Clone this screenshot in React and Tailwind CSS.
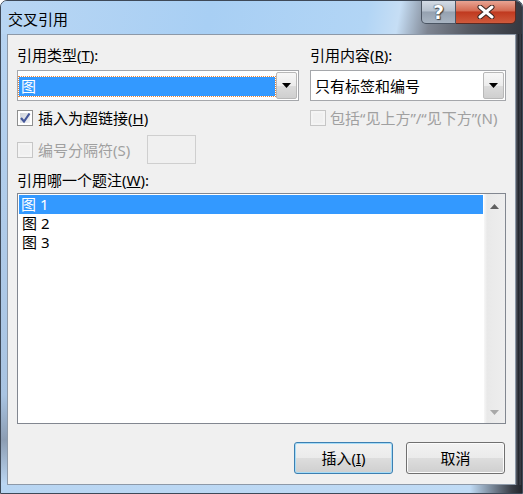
import React from "react";

function Arrow({ color = "#000", up = false }) {
  return (
    <svg width="9" height="5" viewBox="0 0 9 5">
      <polygon points={up ? "0,5 9,5 4.5,0" : "0,0 9,0 4.5,5"} fill={color} />
    </svg>
  );
}

function Checkbox({ checked, disabled }) {
  return (
    <div
      className={`w-[16px] h-[16px] border p-[2px] shrink-0 ${
        disabled ? "border-[#c6c6c6] bg-[#f4f4f4]" : "border-[#8e8f8f] bg-white"
      }`}
    >
      <div
        className={`w-full h-full relative ${
          disabled
            ? "bg-[#f0f0f0]"
            : "bg-[linear-gradient(135deg,#cdd2d9,#f3f4f6)]"
        }`}
      >
        {checked && (
          <svg className="absolute -left-[1px] -top-[1px]" width="12" height="12" viewBox="0 0 12 12">
            <path d="M2 6 L5 9.5 L10.5 1.5" stroke="#44579a" strokeWidth="2.2" fill="none" />
          </svg>
        )}
      </div>
    </div>
  );
}

function DropButton() {
  return (
    <div className="w-[21px] my-[1px] mr-[1px] border border-[#b8b8b8] rounded-[2px] bg-[linear-gradient(to_bottom,#f7f7f7,#ececec_50%,#dcdcdc_51%,#cfcfcf)] flex items-center justify-center">
      <Arrow />
    </div>
  );
}

function WinButton({ children, isDefault }) {
  return (
    <button
      className={`w-[99px] h-[32px] rounded-[3px] border text-[15px] leading-[20px] text-black ${
        isDefault
          ? "border-[#3c7fb1] shadow-[inset_0_0_0_1px_#a6dcf7]"
          : "border-[#707070] shadow-[inset_0_0_0_1px_#fbfbfb]"
      } bg-[linear-gradient(to_bottom,#f2f2f2,#ebebeb_50%,#dddddd_51%,#cfcfcf)]`}
    >
      {children}
    </button>
  );
}

export default function App() {
  return (
    <div className="w-[523px] h-[494px] flex flex-col rounded-t-[7px] border border-[#3e4958] bg-[#b8d5f2] overflow-hidden font-['Noto_Sans','Noto_Sans_CJK_SC',sans-serif] text-[15px] leading-[20px] text-black">
      {/* title bar */}
      <div className="h-[33px] flex items-start justify-between bg-[linear-gradient(100deg,#b9d6f3,#a8cff4_40%,#b2d5f5_70%,#c6def5_76%,#7e8592_82%,#555962_90%,#34373f)]">
        <div className="pl-[7px] pt-[8px] leading-[20px]">交叉引用</div>
        <div className="flex mr-[6px] h-[23px]">
          <div className="w-[35px] h-full border border-[#4b5563] border-t-0 rounded-bl-[5px] bg-[linear-gradient(to_bottom,#d3dbe5,#b6c1ce_45%,#95a1b0_50%,#a8b4c2)] flex items-center justify-center">
            <span className="font-['DejaVu_Sans',sans-serif] font-bold text-[19px] leading-none text-white [text-shadow:0_0_1px_#333,0_0_1px_#333,1px_1px_1px_#444]">?</span>
          </div>
          <div className="w-[60px] h-full border border-[#5b2a22] border-t-0 border-l-0 rounded-br-[5px] bg-[linear-gradient(to_bottom,#e8a493,#d36a52_45%,#c0391f_50%,#cf5a3c)] flex items-center justify-center">
            <svg width="20" height="14" viewBox="0 0 20 14">
              <path d="M4 2 L16 12 M16 2 L4 12" stroke="#3a2420" strokeWidth="5" strokeLinecap="round" />
              <path d="M4 2 L16 12 M16 2 L4 12" stroke="#ffffff" strokeWidth="3" strokeLinecap="round" />
            </svg>
          </div>
        </div>
      </div>

      <div className="flex flex-1">
        <div className="w-[6px] bg-[linear-gradient(to_bottom,#b6d3f1,#a9c4e2_80%,#8c9db3_90%,#bcd7f3)]" />

        {/* client area */}
        <div className="flex-1 border border-[#8d99a8] bg-[#f0f0f0] px-[9px] pt-[10px] flex flex-col">
          <div className="grid grid-cols-[282px_196px] gap-x-[11px]">
            <div>
              引用类型(<u>T</u>):
            </div>
            <div>
              引用内容(<u>R</u>):
            </div>

            {/* combos */}
            <div className="mt-[5px] h-[31px] border border-[#a5a7ab] bg-white flex">
              <div className="flex-1 flex items-center pl-[1px] pr-[1px] pt-[1px]">
                <div className="w-full h-[19px] bg-[#3399ff] outline-1 outline-dotted outline-[#e8863c] text-white pl-[2px] leading-[19px]">
                  图
                </div>
              </div>
              <DropButton />
            </div>
            <div className="mt-[5px] h-[31px] border border-[#a5a7ab] bg-white flex">
              <div className="flex-1 flex items-center pl-[4px]">只有标签和编号</div>
              <DropButton />
            </div>

            {/* checkbox row */}
            <div className="mt-[7px] h-[20px] flex items-center">
              <Checkbox checked />
              <span className="ml-[5px]">
                插入为超链接(<u>H</u>)
              </span>
            </div>
            <div className="mt-[7px] h-[20px] flex items-center">
              <Checkbox disabled />
              <span className="ml-[4px] text-[#a0a0a0]">包括“见上方”/“见下方”(N)</span>
            </div>
          </div>

          {/* separator row */}
          <div className="mt-[7px] h-[29px] flex items-center">
            <div className="w-[130px] flex items-center">
              <Checkbox disabled />
              <span className="ml-[5px] text-[#a0a0a0]">编号分隔符(S)</span>
            </div>
            <div className="w-[49px] h-[29px] border border-[#cfcfcf] bg-[#f0f0f0]" />
          </div>

          <div className="mt-[6px] h-[20px]">
            引用哪一个题注(<u>W</u>):
          </div>

          {/* list */}
          <div className="mt-[3px] h-[231px] border border-[#828790] bg-white flex">
            <div className="flex-1 pt-[1px] px-[1px]">
              <div className="h-[19px] leading-[19px] bg-[#3399ff] text-white pl-[2px]">图 1</div>
              <div className="h-[19px] leading-[19px] pl-[3px]">图 2</div>
              <div className="h-[19px] leading-[19px] pl-[3px]">图 3</div>
            </div>
            <div className="w-[21px] bg-[linear-gradient(to_right,#f7f7f7,#e9e9e9_15%,#eeeeee)] flex flex-col items-center justify-between pt-[10px] pb-[8px]">
              <Arrow up color="#606060" />
              <Arrow color="#a8a8a8" />
            </div>
          </div>

          {/* buttons */}
          <div className="mt-[18px] flex justify-end gap-[13px] pr-[1px]">
            <WinButton isDefault>
              插入(<u>I</u>)
            </WinButton>
            <WinButton>取消</WinButton>
          </div>
        </div>

        <div className="w-[6px] bg-[linear-gradient(to_right,#5a5f6a,#24272e_40%,#3d414b_70%,#1e2026)]" />
      </div>

      <div className="h-[8px] bg-[linear-gradient(to_right,#b8d5f2,#c0dbf5_90%,#3a3e47_98%,#22252b)]" />
    </div>
  );
}
